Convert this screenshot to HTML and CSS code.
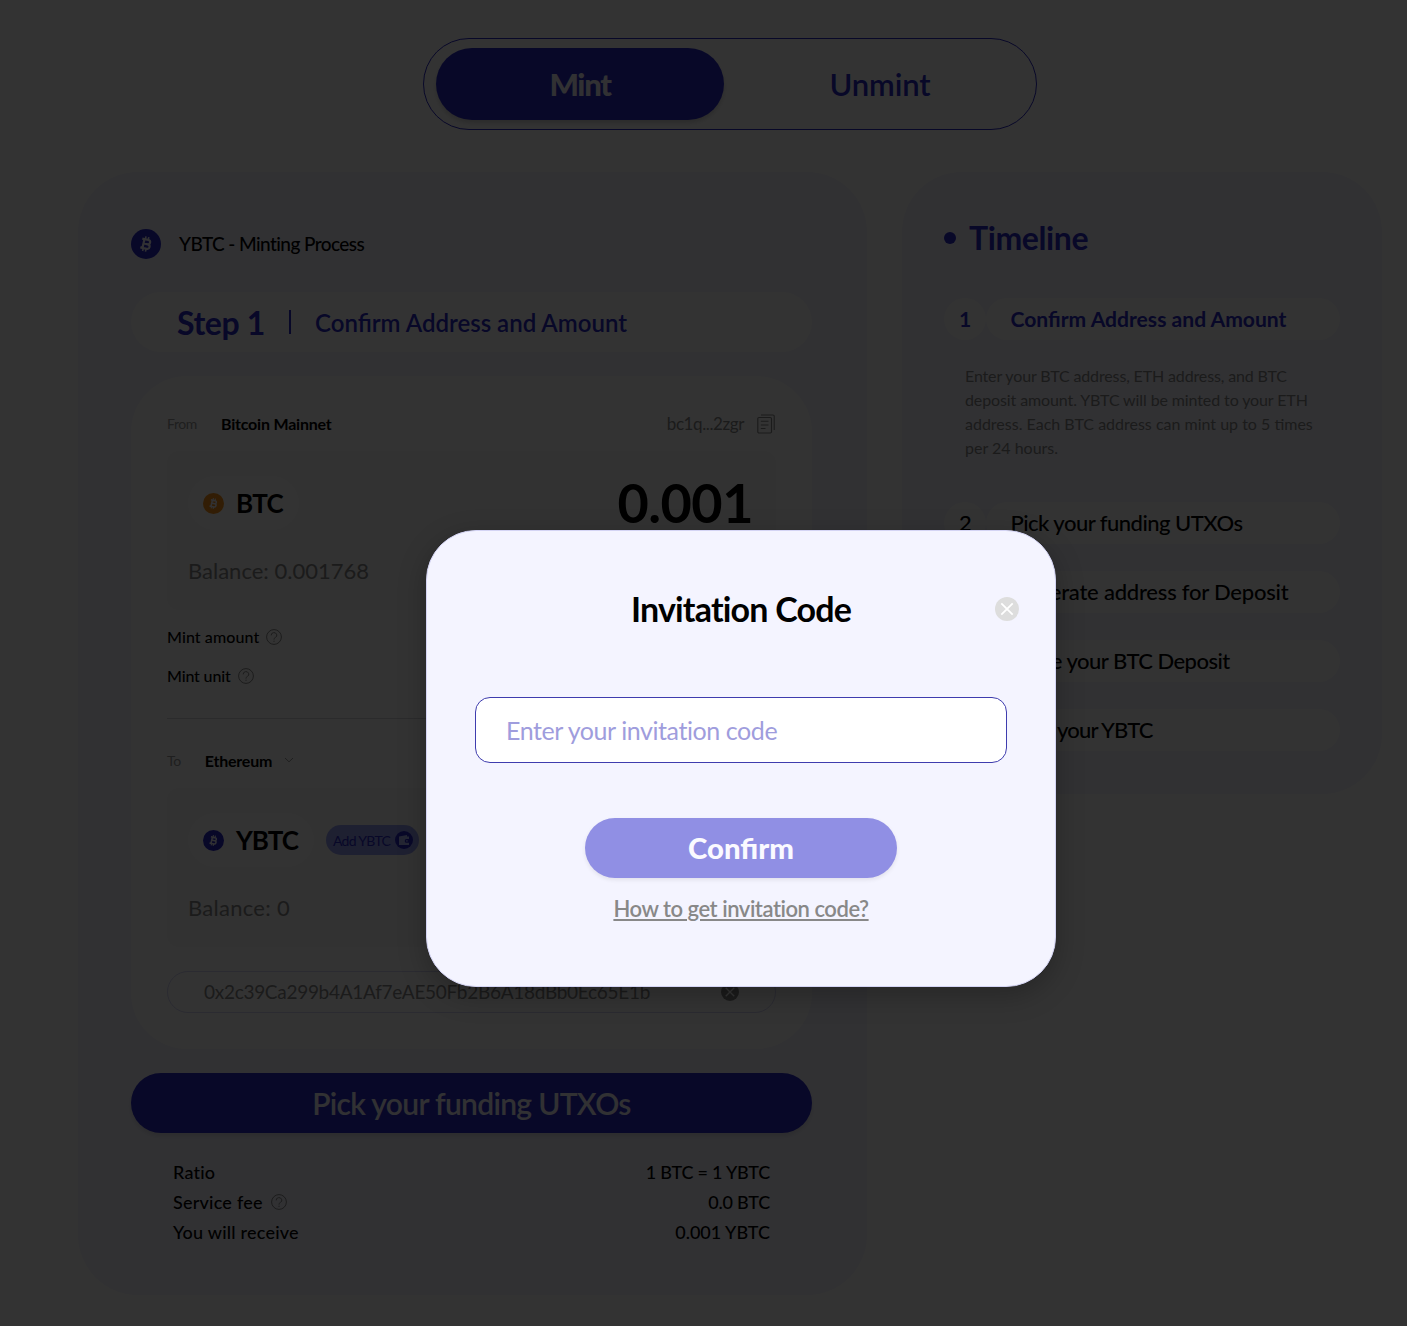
FILE: index.html
```html
<!DOCTYPE html>
<html lang="en">
<head>
<meta charset="utf-8">
<title>YBTC Mint</title>
<link rel="stylesheet" href="styles.css">
</head>
<body>
<svg width="0" height="0" class="defs">
  <symbol id="bitcoin" viewBox="0 0 30 30">
    <g transform="rotate(13 15 15)" fill="none" stroke="currentColor" stroke-width="2.2">
      <path d="M10.2 10.6h6.3a2.1 2.1 0 0 1 0 4.3h-4.2M12.4 10.6v9M16.8 14.9a2.3 2.3 0 0 1 0 4.7h-6.6M12.3 14.9h4.5"/>
      <path stroke-width="1.6" d="M13.3 7.600v3M16.2 7.600v3M13.3 19.6v3M16.2 19.6v3"/>
    </g>
  </symbol>
  <symbol id="help" viewBox="0 0 16 16">
    <g fill="none" stroke="currentColor" stroke-width="1">
      <circle cx="8" cy="8" r="7.4"/>
      <path d="M5.2 6.4a2.8 2.6 0 1 1 4.3 2C8.400 9.100 8 9.400 8 10.600M8 11.700v1.200"/>
    </g>
  </symbol>
  <symbol id="close" viewBox="0 0 24 24">
    <circle cx="12" cy="12" r="12" fill="currentColor"/>
    <path d="M6.300 6.300l11.400 11.400M17.700 6.300L6.300 17.700" stroke="#fff" stroke-width="1.800"/>
  </symbol>
</svg>

<main class="page">
  <nav class="tabs">
    <div class="tab tab-active">Mint</div>
    <div class="tab">Unmint</div>
  </nav>

  <div class="columns">
    <section class="panel mint">
      <header class="mint-title">
        <svg class="coin coin-lg brand"><use href="#bitcoin"/></svg>
        <span>YBTC - Minting Process</span>
      </header>

      <div class="step">
        <span class="step-no">Step 1</span>
        <i class="step-rule"></i>
        <span class="step-name">Confirm Address and Amount</span>
      </div>

      <div class="card">
        <div class="net-row">
          <span class="net-label">From</span>
          <span class="net-name from-name">Bitcoin Mainnet</span>
          <span class="addr">bc1q...2zgr</span>
          <svg class="copy" viewBox="0 0 18 20" fill="none" stroke="currentColor">
            <rect x=".8" y="3.500" width="13.700" height="15.500" rx="1.200" stroke-width="1.200"/>
            <path d="M4 1h12a1.200 1.200 0 0 1 1.200 1.200V16" stroke-width="1.100"/>
            <path d="M3.800 7.300h7.700M3.800 11h7.700M3.800 14.500h4.700" stroke-width="1.100"/>
          </svg>
        </div>
        <div class="box">
          <div class="token-row">
            <div class="token token-btc"><svg class="coin orange"><use href="#bitcoin"/></svg><span>BTC</span></div>
            <span class="amount">0.001</span>
          </div>
          <div class="balance">Balance: 0.001768</div>
        </div>
        <div class="info first">Mint amount <svg class="help"><use href="#help"/></svg></div>
        <div class="info unit">Mint unit <svg class="help"><use href="#help"/></svg></div>
        <div class="divider"></div>
        <div class="net-row to">
          <span class="net-label">To</span>
          <span class="net-name">Ethereum</span>
          <svg class="chevron" viewBox="0 0 10 6"><path d="M1 1l4 3.800L9 1" fill="none" stroke="currentColor"/></svg>
        </div>
        <div class="box">
          <div class="token-row">
            <div class="token token-ybtc"><svg class="coin brand"><use href="#bitcoin"/></svg><span>YBTC</span></div>
            <div class="add"><span>Add YBTC</span>
              <svg viewBox="0 0 18 18"><circle cx="9" cy="9" r="9" fill="#2a28c8"/><path d="M4 5.600L12 4v1.600h2V8h-2.400a1.900 1.900 0 0 0 0 3.800H14V14H4z" fill="#b4bcff"/><circle cx="11.900" cy="9.900" r=".8" fill="#b4bcff"/></svg>
            </div>
          </div>
          <div class="balance balance-short">Balance: 0</div>
        </div>
        <div class="recipient">
          <span>0x2c39Ca299b4A1Af7eAE50Fb2B6A18dBb0Ec65E1b</span>
          <svg><use href="#close"/></svg>
        </div>
      </div>

      <div class="primary">Pick your funding UTXOs</div>

      <div class="summary">
        <div><span>Ratio</span><span class="tight">1 BTC = 1 YBTC</span></div>
        <div><span>Service fee</span><svg class="help"><use href="#help"/></svg><span class="tight">0.0 BTC</span></div>
        <div><span>You will receive</span><span class="plain">0.001 YBTC</span></div>
      </div>
    </section>

    <aside class="panel timeline">
      <h2><i></i><span>Timeline</span></h2>
      <div class="stage current"><b>1</b><span>Confirm Address and Amount</span></div>
      <p><span class="l1">Enter your BTC address, ETH address, and BTC</span><br><span class="l2">deposit amount. YBTC will be minted to your ETH</span><br>address. Each BTC address can mint up to 5 times<br>per 24 hours.</p>
      <div class="stage"><b>2</b><span>Pick your funding UTXOs</span></div>
      <div class="stage"><b>3</b><span class="s3">Generate address for Deposit</span></div>
      <div class="stage"><b>4</b><span>Make your BTC Deposit</span></div>
      <div class="stage"><b>5</b><span class="s5">Mint your YBTC</span></div>
    </aside>
  </div>
</main>

<div class="overlay">
  <div class="modal">
    <header>
      <h1>Invitation Code</h1>
      <svg class="modal-close"><use href="#close"/></svg>
    </header>
    <div class="field">Enter your invitation code</div>
    <div class="confirm">Confirm</div>
    <a class="how">How to get invitation code?</a>
  </div>
</div>
</body>
</html>
```
FILE: styles.css
```css
* { box-sizing: border-box; }
body {
  margin: 0;
  width: 1407px;
  height: 1326px;
  overflow: hidden;
  position: relative;
  background: #fff;
  color: #000;
  font-family: Lato, "Open Sans", sans-serif;
  white-space: nowrap;
}
.defs { position: absolute; }
svg { display: block; flex: none; }

.page { padding: 38px 25px 0 78px; }

/* Mint / Unmint switch */
.tabs {
  display: flex;
  width: 614px;
  height: 92px;
  margin-left: 345px;
  padding: 9px 12px;
  border: 1px solid #2a28c8;
  border-radius: 46px;
}
.tab {
  width: 288px;
  height: 72px;
  border-radius: 36px;
  font-size: 31px;
  font-weight: 600;
  line-height: 72px;
  text-align: center;
  color: #2a28c8;
}
.tab + .tab { margin-left: 12px; letter-spacing: -.15px; }
.tab-active {
  background: #2a28c8;
  color: #f4f4ff;
  font-weight: 900;
  letter-spacing: -1.3px;
  box-shadow: 0 3px 4px rgba(0, 0, 0, .16);
}

.columns { display: flex; align-items: flex-start; gap: 35px; margin-top: 42px; }
.panel { background: #f4f4ff; border-radius: 60px; }

/* Left panel */
.mint { width: 789px; height: 1123px; padding: 57px 55px 0 53px; }
.mint-title {
  display: flex;
  align-items: center;
  gap: 18px;
  height: 30px;
  font-size: 19px;
  font-weight: 500;
  letter-spacing: -.58px;
}
.mint-title span { padding-bottom: 2px; }
.coin { width: 21px; height: 21px; border-radius: 50%; color: #f4f4ff; }
.coin-lg { width: 30px; height: 30px; }
.brand { background: #2a28c8; }
.orange { background: #f7931a; }

.step {
  display: flex;
  align-items: center;
  height: 60px;
  margin-top: 33px;
  padding-left: 46px;
  border-radius: 30px;
  background: #fff;
  color: #2a28c8;
}
.step-no { width: 112px; font-size: 32px; font-weight: 700; letter-spacing: -.4px; }
.step-rule { width: 2px; height: 24px; background: #2a28c8; }
.step-name { margin-left: 24px; font-size: 24px; font-weight: 600; }

.card {
  height: 673px;
  margin-top: 24px;
  padding: 35px 36px 0;
  border-radius: 56px;
  background: #fff;
}
.net-row { display: flex; align-items: center; height: 24px; }
.net-label { font-size: 14px; letter-spacing: -.4px; color: #999; }
.net-name { margin-left: 24px; font-size: 16px; font-weight: 700; letter-spacing: -.2px; }
.addr { margin-left: auto; font-size: 17px; letter-spacing: -.4px; color: #888; }
.copy { width: 18px; height: 20px; margin: 2px 1px 0 13px; color: #888; }
.chevron { width: 10px; height: 6px; margin-left: 12px; color: #999; }

.box {
  height: 159px;
  margin-top: 16px;
  padding: 25px 23px 0 21px;
  border-radius: 12px;
  background: #f8f8f8;
}
.token-row { display: flex; align-items: center; height: 54px; }
.token {
  display: flex;
  align-items: center;
  gap: 12px;
  height: 54px;
  padding-left: 15px;
  border-radius: 27px;
  background: #fff;
  font-size: 26px;
  font-weight: 700;
}
.token-btc { width: 111px; letter-spacing: -.7px; }
.token-ybtc { width: 126px; letter-spacing: -1px; }
.amount { margin-left: auto; font-size: 54px; font-weight: 700; letter-spacing: -.5px; line-height: 54px; }
.balance { height: 28px; margin-top: 27px; font-size: 22px; line-height: 28px; color: #888; }
.balance-short { letter-spacing: .28px; }

.info { display: flex; align-items: center; gap: 7px; height: 20px; font-size: 16px; font-weight: 500; letter-spacing: .1px; }
.info .help { margin-top: 2px; }
.first { margin-top: 16px; }
.unit { margin-top: 19px; letter-spacing: -.15px; }
.help { width: 16px; height: 16px; color: #888; }
.divider { height: 1px; margin-top: 33px; background: #d5d5dd; }
.to { margin-top: 29px; }

.add {
  display: flex;
  align-items: center;
  justify-content: space-between;
  width: 93px;
  height: 30px;
  margin-left: 12px;
  padding: 0 6px 0 7px;
  border-radius: 15px;
  background: #97a0f4;
  color: #2a28c8;
  font-size: 14px;
  letter-spacing: -.7px;
}
.add svg { width: 18px; height: 18px; }

.recipient {
  display: flex;
  align-items: center;
  justify-content: space-between;
  height: 42px;
  margin-top: 24px;
  padding: 0 36px;
  border: 1px solid #d4d4f4;
  border-radius: 21px;
  color: #888;
  font-size: 19px;
  letter-spacing: -.29px;
}
.recipient span { padding-bottom: 2px; }
.recipient svg { width: 18px; height: 18px; }

.primary {
  height: 60px;
  margin-top: 24px;
  border-radius: 30px;
  background: #2a28c8;
  color: #f4f4ff;
  font-size: 30px;
  font-weight: 600;
  letter-spacing: -.68px;
  line-height: 61px;
  text-align: center;
  box-shadow: 0 3px 4px rgba(0, 0, 0, .1);
}
.summary { margin-top: 24px; padding: 0 42px; font-size: 18px; font-weight: 500; letter-spacing: .22px; }
.summary div { display: flex; align-items: center; height: 30px; }
.summary span:last-child { margin-left: auto; }
.summary .help { margin-left: 8px; }
.summary .tight { letter-spacing: -.22px; }
.summary .plain { letter-spacing: 0; }

/* Right panel */
.timeline { width: 480px; height: 622px; padding: 42px 42px 0; }
h2 {
  display: flex;
  align-items: center;
  gap: 13px;
  height: 48px;
  margin: 0;
  color: #2a28c8;
  font-size: 32px;
  font-weight: 700;
  letter-spacing: -.4px;
}
h2 span { padding-bottom: 2px; }
h2 i { width: 12px; height: 12px; border-radius: 50%; background: #2a28c8; }
.stage {
  display: flex;
  height: 42px;
  margin-top: 27px;
  font-size: 22px;
  font-weight: 500;
  letter-spacing: -.52px;
  line-height: 42px;
}
.stage b { width: 42px; border-radius: 21px; background: #fff; font-weight: 500; text-align: center; }
.stage span { flex: 1; padding-left: 24.500px; border-radius: 21px; background: #fff; }
.stage .s3 { letter-spacing: -.22px; }
.stage .s5 { letter-spacing: -.85px; }
h2 + .stage { margin-top: 36px; }
.current { color: #2a28c8; font-size: 21.100px; font-weight: 700; letter-spacing: 0; }
.current b { font-weight: 700; }
.timeline p { margin: 24px 0 42px 21px; font-size: 16px; line-height: 24px; color: #888; }
.timeline p + .stage { margin-top: 0; }
.l1 { letter-spacing: -.14px; }
.l2 { letter-spacing: -.11px; }

/* Invitation dialog */
.overlay { position: absolute; inset: 0; padding: 530px 0 0 426px; background: rgba(0, 0, 0, .8); }
.modal {
  display: flex;
  flex-direction: column;
  align-items: center;
  width: 630px;
  height: 457px;
  border: 1px solid #d4d4f4;
  border-radius: 50px;
  background: #f4f4ff;
  box-shadow: 0 8px 28px rgba(0, 0, 0, .25);
}
.modal header {
  display: grid;
  grid-template-columns: 24px 1fr 24px;
  align-items: center;
  width: 100%;
  height: 48px;
  margin-top: 54px;
  padding: 0 36px;
}
h1 { grid-column: 2; margin: 0; padding-bottom: 2px; font-size: 34px; font-weight: 700; letter-spacing: -.8px; text-align: center; }
.modal-close { width: 24px; height: 24px; color: #ddd; }
.field {
  width: 532px;
  height: 66px;
  margin-top: 64px;
  padding-left: 30px;
  border: 1px solid #3e3cae;
  border-radius: 15px;
  background: #fff;
  color: #9f9ddd;
  font-size: 25px;
  letter-spacing: -.43px;
  line-height: 64px;
}
.confirm {
  width: 312px;
  height: 60px;
  margin-top: 55px;
  border-radius: 30px;
  background: #908fe4;
  color: #fafaff;
  font-size: 29.300px;
  font-weight: 900;
  line-height: 60px;
  text-align: center;
  box-shadow: 0 2px 4px rgba(0, 0, 0, .08);
}
.how {
  margin-top: 17px;
  color: #888;
  font-size: 22px;
  font-weight: 600;
  letter-spacing: -.46px;
  line-height: 27px;
  text-decoration: underline;
}
```
